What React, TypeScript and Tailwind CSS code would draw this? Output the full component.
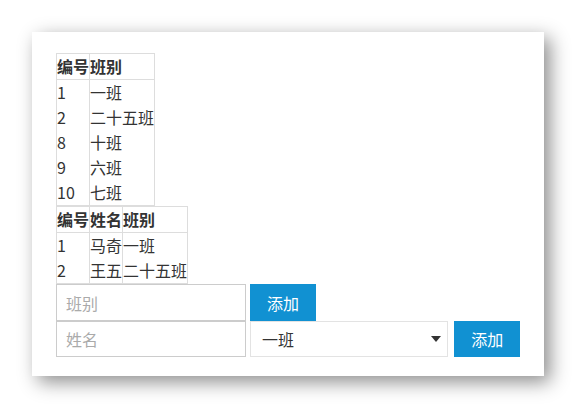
const classes = [
  { id: 1, name: '一班' },
  { id: 2, name: '二十五班' },
  { id: 8, name: '十班' },
  { id: 9, name: '六班' },
  { id: 10, name: '七班' },
];

const students = [
  { id: 1, name: '马奇', cls: '一班' },
  { id: 2, name: '王五', cls: '二十五班' },
];

const App = () => {
  return (
    <div className="w-[576px] h-[409px] bg-white pt-[32px] pl-[32px] text-[#333] text-[16px] font-['Noto_Sans_CJK_SC','Noto_Sans',sans-serif]">
      <div className="w-[512px] h-[344px] bg-white pt-[21px] px-[24px] shadow-[6px_6px_18px_rgba(0,0,0,0.45)]">
        <table className="border-collapse border border-[#ddd]">
          <thead>
            <tr className="border-b border-[#ddd]">
              <th className="border-x border-[#ddd] p-0 text-left font-bold leading-[25px]">编号</th>
              <th className="border-x border-[#ddd] p-0 text-left font-bold leading-[25px]">班别</th>
            </tr>
          </thead>
          <tbody>
            {classes.map((c) => (
              <tr key={c.id}>
                <td className="border-x border-[#ddd] p-0 leading-[25px]">{c.id}</td>
                <td className="border-x border-[#ddd] p-0 leading-[25px]">{c.name}</td>
              </tr>
            ))}
          </tbody>
        </table>
        <table className="border-collapse border border-[#ddd]">
          <thead>
            <tr className="border-b border-[#ddd]">
              <th className="border-x border-[#ddd] p-0 text-left font-bold leading-[25px]">编号</th>
              <th className="border-x border-[#ddd] p-0 text-left font-bold leading-[25px]">姓名</th>
              <th className="border-x border-[#ddd] p-0 text-left font-bold leading-[25px]">班别</th>
            </tr>
          </thead>
          <tbody>
            {students.map((s) => (
              <tr key={s.id}>
                <td className="border-x border-[#ddd] p-0 leading-[25px] w-[33px]">{s.id}</td>
                <td className="border-x border-[#ddd] p-0 leading-[25px]">{s.name}</td>
                <td className="border-x border-[#ddd] p-0 leading-[25px]">{s.cls}</td>
              </tr>
            ))}
          </tbody>
        </table>
        <div className="flex items-start">
          <input
            placeholder="班别"
            className="w-[190px] h-[37px] border border-[#ccc] px-[9px] outline-none placeholder:text-[#aaa]"
          />
          <button className="ml-[4px] w-[66px] h-[37px] bg-[#1191d2] text-white">添加</button>
        </div>
        <div className="flex items-start">
          <input
            placeholder="姓名"
            className="w-[190px] h-[36px] border border-[#ccc] px-[9px] outline-none placeholder:text-[#aaa]"
          />
          <div className="ml-[4px] w-[199px] h-[36px] border border-[#e3e3e3] flex items-center justify-between pl-[11px] pr-[6px]">
            <span>一班</span>
            <svg width="10" height="6" viewBox="0 0 10 6">
              <path d="M0 0h10L5 6z" fill="#333" />
            </svg>
          </div>
          <button className="ml-[6px] w-[66px] h-[36px] bg-[#1191d2] text-white">添加</button>
        </div>
      </div>
    </div>
  );
};

export default App;
